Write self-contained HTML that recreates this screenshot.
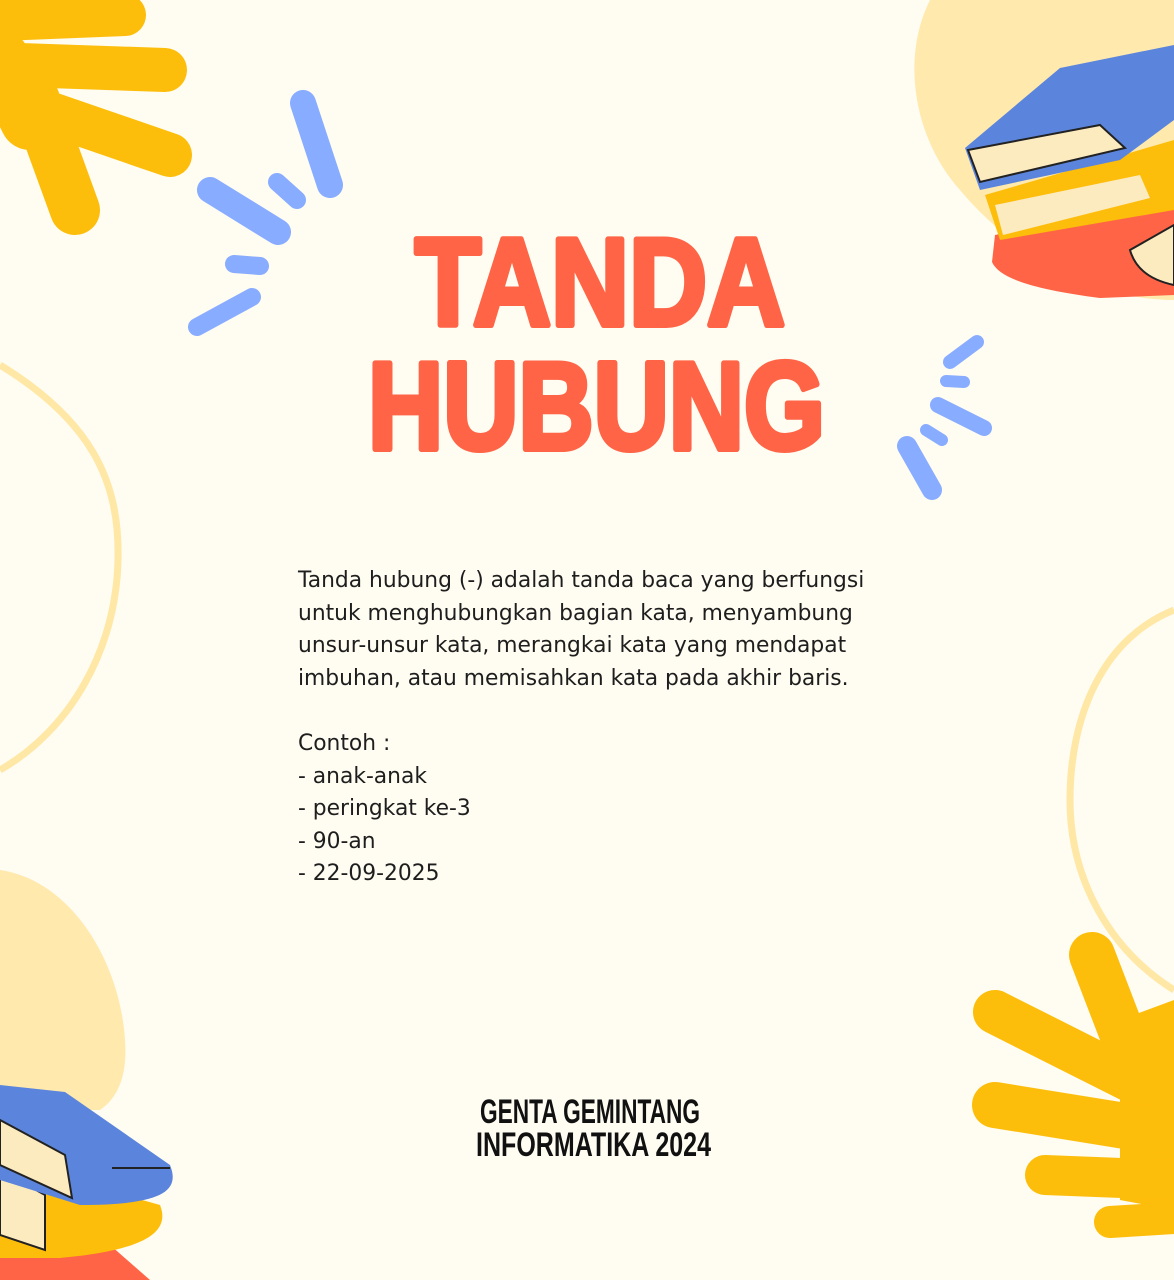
<!DOCTYPE html>
<html><head><meta charset="utf-8"><style>
html,body{margin:0;padding:0}
body{width:1174px;height:1280px;overflow:hidden;background:#fffcf1;position:relative;font-family:"Liberation Sans",sans-serif}
svg{position:absolute;left:0;top:0}
.body{position:absolute;left:298px;top:565px;line-height:32.6px;color:#1e1e1e;font-family:"DejaVu Sans","Liberation Sans",sans-serif;font-size:21.8px}
</style></head><body>
<svg width="1174" height="1280" viewBox="0 0 1174 1280">
<g fill="none" stroke="#ffe7a6" stroke-width="7">
<path d="M0 365 C90 420 120 480 118 560 C116 650 70 730 0 770"/>
<path d="M1174 610 C1100 640 1070 720 1070 800 C1070 880 1110 950 1174 990"/>
</g>
<path d="M930 0 L1174 0 L1174 300 C1090 300 1010 250 960 190 C915 140 900 60 930 0Z" fill="#ffe9ad"/>
<path d="M0 870 C70 880 120 960 125 1040 C128 1080 115 1100 100 1110 L0 1110Z" fill="#ffe9ad"/>
<path d="M1120 1020 L1174 1000 L1174 1210 L1120 1200Z" fill="#fdbd0b"/>
<g stroke="#fdbd0b" stroke-linecap="round" fill="none">
<path d="M0 20 L125 15" stroke-width="42"/>
<path d="M20 65 L165 70" stroke-width="44"/>
<path d="M25 105 L170 155" stroke-width="44"/>
<path d="M35 100 L75 210" stroke-width="50"/>
<path d="M0 60 L30 120" stroke-width="60"/>
<path d="M1092 955 L1140 1080" stroke-width="46"/>
<path d="M995 1012 L1130 1080" stroke-width="44"/>
<path d="M995 1105 L1150 1130" stroke-width="46"/>
<path d="M1045 1175 L1174 1180" stroke-width="40"/>
<path d="M1110 1222 L1174 1218" stroke-width="32"/>
</g>
<g stroke="#88acff" stroke-linecap="round" fill="none">
<path d="M303 103 L330 185" stroke-width="26"/>
<path d="M210 190 L278 232" stroke-width="26"/>
<path d="M277 182 L297 200" stroke-width="18"/>
<path d="M234 264 L260 266" stroke-width="18"/>
<path d="M197 327 L252 297" stroke-width="18"/>
<path d="M977 342 L950 362" stroke-width="14"/>
<path d="M946 381 L964 382" stroke-width="12"/>
<path d="M938 405 L984 428" stroke-width="16"/>
<path d="M926 430 L942 440" stroke-width="12"/>
<path d="M907 446 L932 490" stroke-width="20"/>
</g>
<!-- top-right books -->
<path d="M995 235 L1174 195 L1174 295 L1100 298 C1040 290 1000 280 992 262Z" fill="#ff6446"/>
<path d="M1130 250 L1174 225 L1174 285 C1150 280 1135 268 1130 250Z" fill="#fdebc0" stroke="#222" stroke-width="2"/>
<path d="M985 195 L1174 140 L1174 210 L1000 240Z" fill="#fdbd0b"/>
<path d="M995 205 L1140 175 L1150 198 L1003 235Z" fill="#fdebc0"/>
<path d="M965 148 L1060 68 L1174 45 L1174 120 L1120 160 L980 190Z" fill="#5b85dc"/>
<path d="M968 150 L1100 125 L1125 148 L980 182Z" fill="#fdebc0" stroke="#222" stroke-width="2"/>
<!-- bottom-left books -->
<path d="M0 1240 L110 1245 L150 1280 L0 1280Z" fill="#ff6446"/>
<path d="M0 1160 L160 1205 C170 1230 150 1250 60 1258 L0 1258Z" fill="#fdbd0b"/>
<path d="M0 1170 L45 1195 L45 1250 L0 1235Z" fill="#fdebc0" stroke="#222" stroke-width="2"/>
<path d="M0 1085 L65 1092 L170 1165 C180 1190 165 1205 80 1205 L0 1180Z" fill="#5b85dc"/>
<path d="M0 1120 L65 1155 L72 1198 L0 1165Z" fill="#fdebc0" stroke="#222" stroke-width="2"/>
<path d="M112 1168 L170 1168" stroke="#222" stroke-width="2"/>
<g font-family="Liberation Sans, sans-serif" font-weight="bold" fill="#ff6446" stroke="#ff6446" stroke-width="6" stroke-linejoin="round">
<text x="415" y="325" font-size="124" textLength="370" lengthAdjust="spacingAndGlyphs">TANDA</text>
<text x="368" y="449" font-size="124" textLength="457" lengthAdjust="spacingAndGlyphs">HUBUNG</text>
</g>
<g font-family="Liberation Sans, sans-serif" font-weight="bold" fill="#111">
<text x="480" y="1123" font-size="34" textLength="220" lengthAdjust="spacingAndGlyphs">GENTA GEMINTANG</text>
<text x="476" y="1156" font-size="34" textLength="235" lengthAdjust="spacingAndGlyphs">INFORMATIKA 2024</text>
</g>
</svg>
<div class="body">Tanda hubung (-) adalah tanda baca yang berfungsi<br>untuk menghubungkan bagian kata, menyambung<br>unsur-unsur kata, merangkai kata yang mendapat<br>imbuhan, atau memisahkan kata pada akhir baris.<br><br>Contoh :<br>- anak-anak<br>- peringkat ke-3<br>- 90-an<br>- 22-09-2025</div>
</body></html>
